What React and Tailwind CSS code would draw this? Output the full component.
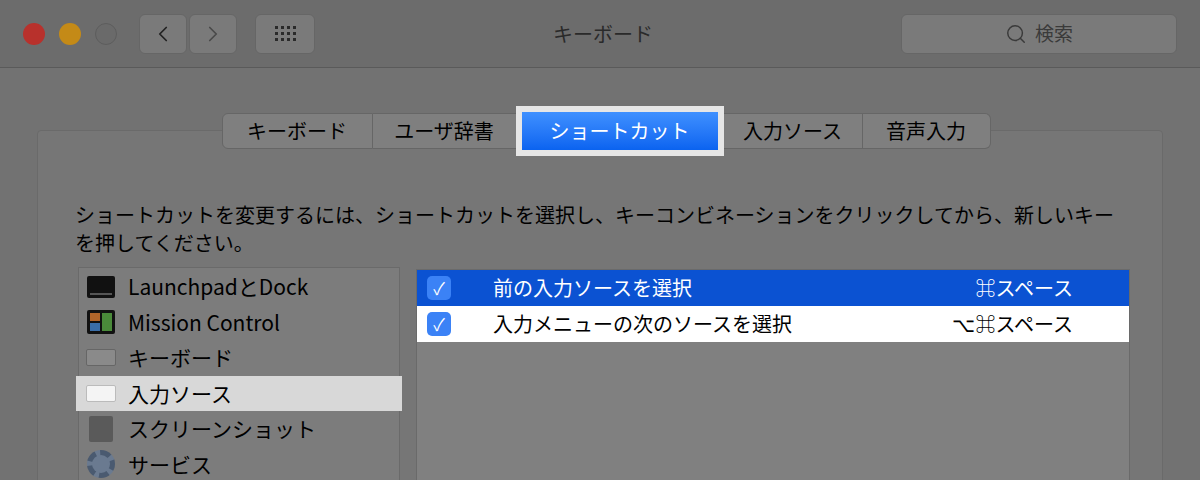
import { Search, ChevronLeft, ChevronRight } from "lucide-react";

const font = { fontFamily: '"Noto Sans CJK JP", "Noto Sans", sans-serif' };

function Grid() {
  return (
    <div className="grid grid-cols-4 gap-[3px]">
      {Array.from({ length: 12 }).map((_, i) => (
        <span key={i} className="w-[3px] h-[3px] bg-[#2a2a2a]" />
      ))}
    </div>
  );
}

const KeyIcon = ({ light }) => (
  <div className={`w-[30px] h-[17px] rounded-[2px] border ${light ? "bg-[#f4f4f4] border-[#bbb]" : "bg-[#8a8a8a] border-[#666]"}`} />
);

const left = [
  { label: "LaunchpadとDock", icon: <div className="w-[28px] h-[22px] bg-[#111] rounded-[2px] flex items-end p-[3px]"><div className="w-full h-[2px] bg-[#555]" /></div> },
  { label: "Mission Control", icon: <div className="w-[28px] h-[24px] bg-[#111] rounded-[2px] grid grid-cols-2 gap-[2px] p-[3px]"><div className="bg-[#b0652a]" /><div className="bg-[#4a8a3a] row-span-2" /><div className="bg-[#3a6ea8]" /></div> },
  { label: "キーボード", icon: <KeyIcon /> },
  { label: "入力ソース", icon: <KeyIcon light />, sel: true },
  { label: "スクリーンショット", icon: <div className="w-[24px] h-[26px] bg-[#5a5a5a] rounded-[2px]" /> },
  { label: "サービス", icon: <div className="w-[28px] h-[28px] rounded-full border-[5px] border-dashed border-[#4a5a70] bg-[#6a7a90]" /> },
];

export default function App() {
  return (
    <div className="w-[1200px] h-[480px] overflow-hidden bg-[#727272] relative text-black" style={font}>
      <div className="h-[68px] bg-[#6c6c6c] border-b border-[#5a5a5a] flex items-center px-[23px]">
        <span className="w-[22px] h-[22px] rounded-full bg-[#b8312c]" />
        <span className="w-[22px] h-[22px] rounded-full bg-[#c48a17] ml-[14px]" />
        <span className="w-[22px] h-[22px] rounded-full bg-[#6a6a6a] border border-[#5d5d5d] ml-[14px]" />
        <div className="ml-[22px] flex gap-[2px]">
          <div className="w-[48px] h-[40px] rounded-[6px] bg-[#7a7a7a] border border-[#666] flex items-center justify-center"><ChevronLeft size={26} strokeWidth={1.6} className="text-[#222]" /></div>
          <div className="w-[48px] h-[40px] rounded-[6px] bg-[#7a7a7a] border border-[#666] flex items-center justify-center"><ChevronRight size={26} strokeWidth={1.6} className="text-[#4a4a4a]" /></div>
        </div>
        <div className="ml-[18px] w-[60px] h-[40px] rounded-[6px] bg-[#7a7a7a] border border-[#666] flex items-center justify-center"><Grid /></div>
        <div className="flex-1 text-center text-[20px] text-[#2a2a2a] pr-[10px]">キーボード</div>
        <div className="w-[276px] h-[40px] rounded-[6px] bg-[#7a7a7a] border border-[#666] flex items-center justify-center gap-2 text-[19px] text-[#3a3a3a]">
          <Search size={22} strokeWidth={1.6} /> 検索
        </div>
      </div>

      <div className="relative mx-[37px] mt-[62px] h-[400px] bg-[#767676] border border-[#6a6a6a] rounded-[4px]">
        <div className="absolute -top-[18px] left-0 right-0 flex justify-center">
          <div className="flex items-center h-[36px] text-[20px] text-black ml-[12px]">
            <div className="h-full w-[151px] justify-center flex items-center bg-[#7f7f7f] border border-[#666] rounded-l-[6px]">キーボード</div>
            <div className="h-full w-[143px] justify-center flex items-center bg-[#7f7f7f] border-y border-[#666]">ユーザ辞書</div>
            <div className="h-[50px] w-[208px] p-[6px] bg-[#e6e6e6] -my-[7px]">
              <div className="h-full flex items-center justify-center bg-gradient-to-b from-[#3f90ff] to-[#0a63f0] text-white">ショートカット</div>
            </div>
            <div className="h-full w-[139px] justify-center flex items-center bg-[#7f7f7f] border-y border-r border-[#666]">入力ソース</div>
            <div className="h-full w-[128px] justify-center flex items-center bg-[#7f7f7f] border-y border-r border-[#666] rounded-r-[6px]">音声入力</div>
          </div>
        </div>

        <p className="absolute left-[37px] top-[70px] w-[1050px] text-[20px] leading-[28px]">
          ショートカットを変更するには、ショートカットを選択し、キーコンビネーションをクリックしてから、新しいキーを押してください。
        </p>

        <div className="absolute left-[40px] top-[136px] w-[322px] h-[270px] bg-[#7c7c7c] border border-[#6a6a6a] pt-[1px]">
          {left.map((r) => (
            <div key={r.label} className={`h-[35.5px] flex items-center gap-[12px] text-[21px] ${r.sel ? "bg-[#d8d8d8] -mx-[3px] px-[10px]" : "px-[7px]"}`}>
              <div className="w-[30px] flex justify-center">{r.icon}</div>
              {r.label}
            </div>
          ))}
        </div>

        <div className="absolute left-[378px] top-[138px] w-[714px] h-[270px] bg-[#808080] border border-[#6a6a6a]">
          {[
            { t: "前の入力ソースを選択", k: "⌘スペース", sel: true },
            { t: "入力メニューの次のソースを選択", k: "⌥⌘スペース" },
          ].map((r) => (
            <div key={r.t} className={`h-[36px] flex items-center text-[20px] ${r.sel ? "bg-[#0b52d2] text-white" : "bg-white text-black"}`}>
              <div className="w-[24px] h-[24px] ml-[10px] rounded-[5px] bg-[#3b82f6] flex items-center justify-center text-white text-[17px]">✓</div>
              <span className="ml-[42px] flex-1">{r.t}</span>
              <span className="mr-[56px]">{r.k}</span>
            </div>
          ))}
        </div>
      </div>
    </div>
  );
}
